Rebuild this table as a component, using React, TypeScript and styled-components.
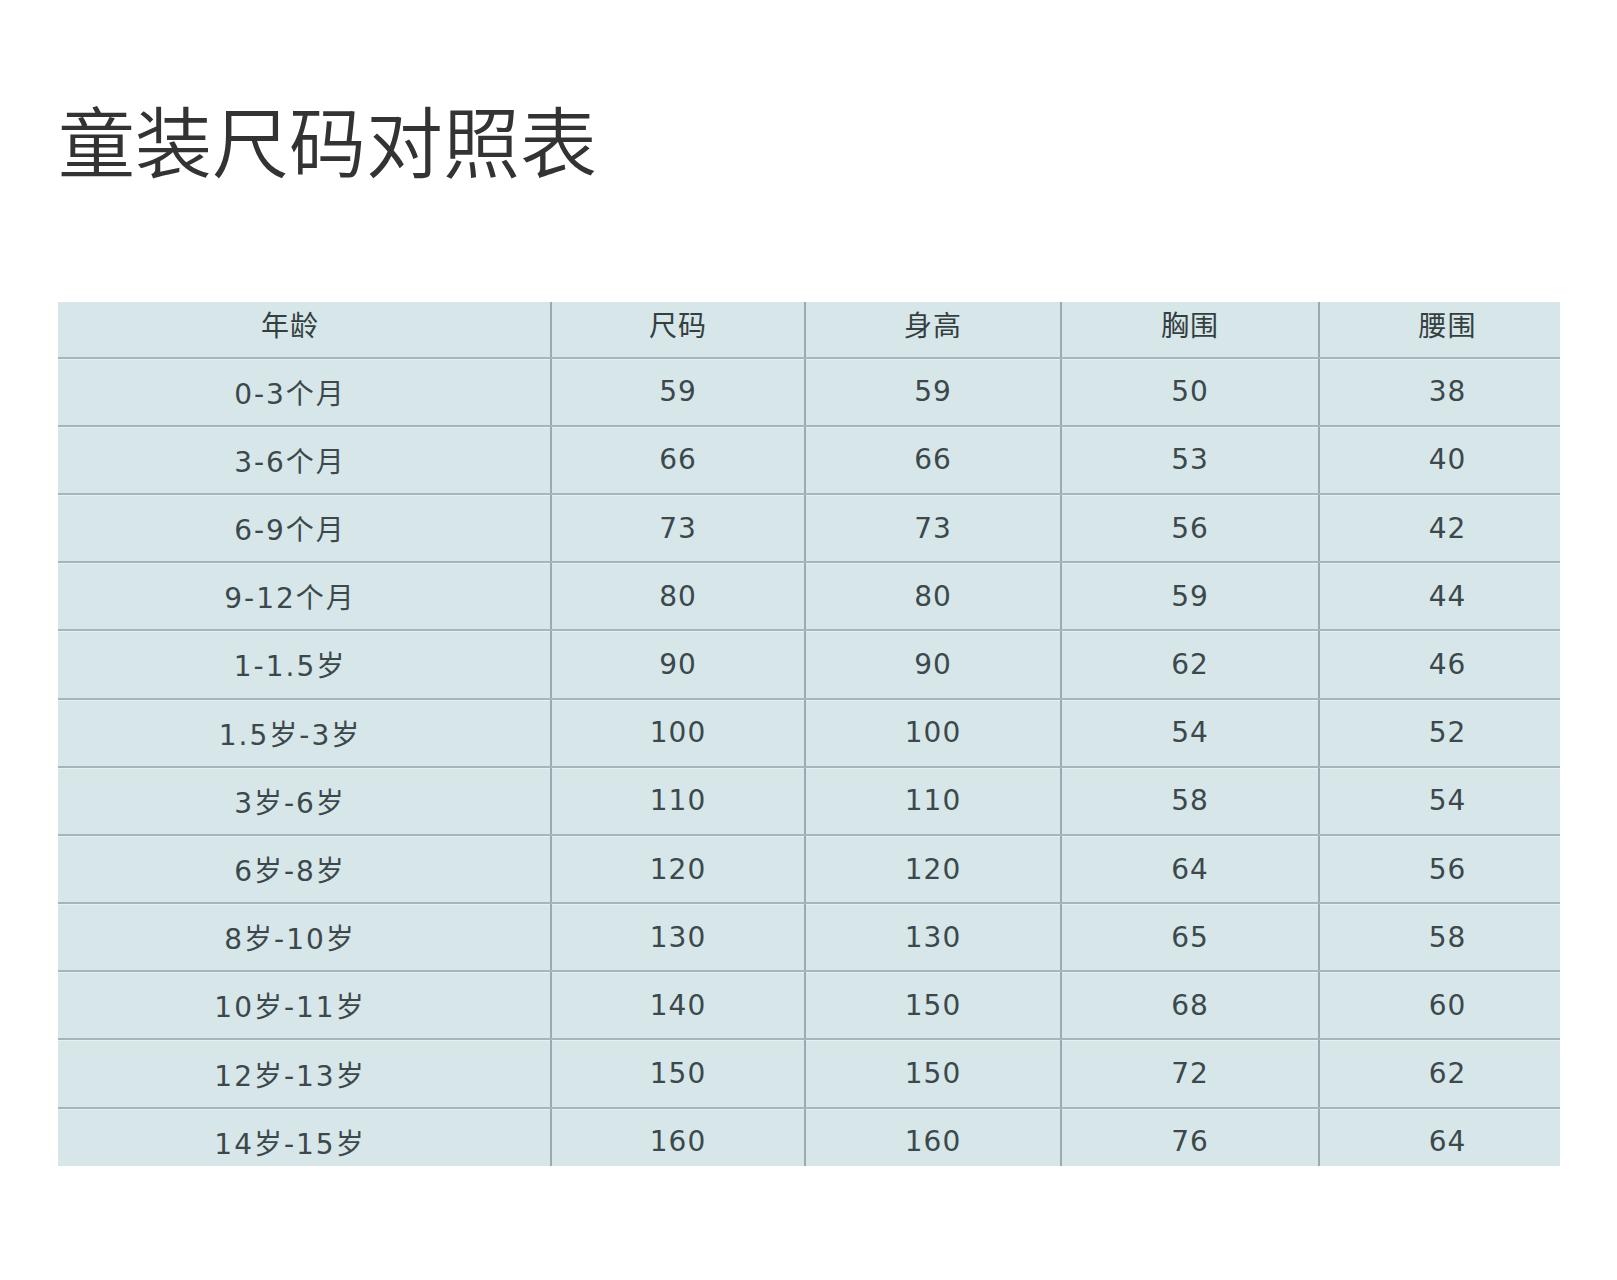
import React from "react";
import styled, { createGlobalStyle } from "styled-components";

const GlobalStyle = createGlobalStyle`
  html, body {
    margin: 0;
    padding: 0;
    background: #ffffff;
  }
`;

type Row = [string, string, string, string, string];

const headers: Row = ["年龄", "尺码", "身高", "胸围", "腰围"];

const rows: Row[] = [
  ["0-3个月", "59", "59", "50", "38"],
  ["3-6个月", "66", "66", "53", "40"],
  ["6-9个月", "73", "73", "56", "42"],
  ["9-12个月", "80", "80", "59", "44"],
  ["1-1.5岁", "90", "90", "62", "46"],
  ["1.5岁-3岁", "100", "100", "54", "52"],
  ["3岁-6岁", "110", "110", "58", "54"],
  ["6岁-8岁", "120", "120", "64", "56"],
  ["8岁-10岁", "130", "130", "65", "58"],
  ["10岁-11岁", "140", "150", "68", "60"],
  ["12岁-13岁", "150", "150", "72", "62"],
  ["14岁-15岁", "160", "160", "76", "64"],
];

export default function App() {
  return (
    <>
      <GlobalStyle />
      <Page>
        <Title>童装尺码对照表</Title>
        <TableFrame>
          <Table>
            <TableRow>
              {headers.map((h, i) => (
                <Cell key={i} $header>
                  {h}
                </Cell>
              ))}
            </TableRow>
            {rows.map((r, ri) => (
              <TableRow key={ri}>
                {r.map((v, ci) => (
                  <Cell key={ci}>{v}</Cell>
                ))}
              </TableRow>
            ))}
          </Table>
        </TableFrame>
      </Page>
    </>
  );
}

const Page = styled.div`
  width: 1617px;
  height: 1280px;
  padding: 100px 0 0 58px;
  box-sizing: border-box;
`;

const Title = styled.h1`
  margin: 0 0 125px 0;
  font-family: "Noto Sans CJK SC", sans-serif;
  font-weight: 350;
  font-size: 77px;
  line-height: 77px;
  color: #333333;
`;

/* the source table is a crop: edges of the first/last column and row are cut off */
const TableFrame = styled.div`
  width: 1502px;
  height: 864px;
  overflow: hidden;
  background: #d6e6e9;
`;

const Table = styled.div`
  margin: -11.6px 0 0 -28px;
  display: flex;
  flex-direction: column;
`;

const TableRow = styled.div`
  display: grid;
  grid-template-columns: 522px 254px 256px 258px 255px;
  height: 68.2px;
  box-sizing: border-box;
  border-bottom: 2px solid #a3b6ba;
  box-shadow: 0 1px 0 #e6f0f1;
`;

const Cell = styled.div<{ $header?: boolean }>`
  display: flex;
  align-items: center;
  justify-content: center;
  border-right: 2px solid #9aabb0;
  font-family: "DejaVu Sans", "Noto Sans CJK SC", sans-serif;
  font-size: 28px;
  letter-spacing: 1px;
  color: ${(p) => (p.$header ? "#34403f" : "#3c484b")};
  &:first-child {
    letter-spacing: ${(p) => (p.$header ? "1px" : "2px")};
  }
  &:last-child {
    border-right: none;
  }
`;
